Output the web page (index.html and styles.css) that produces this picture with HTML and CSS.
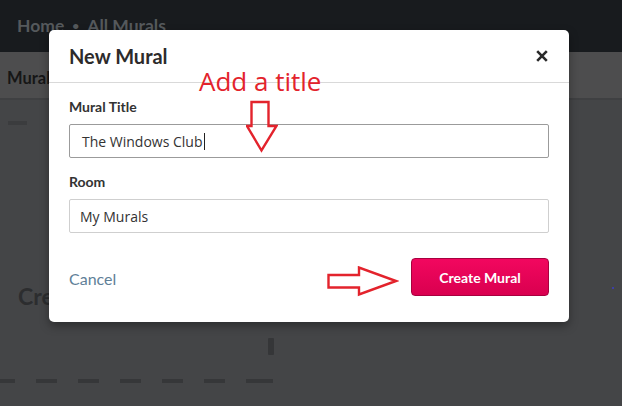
FILE: index.html
```html
<!DOCTYPE html>
<html>
<head>
<meta charset="utf-8">
<link rel="stylesheet" href="styles.css">
</head>
<body>
<div class="page">
  <header class="topbar">
    <span class="crumb">Home</span><span class="dot">•</span><span class="crumb">All Murals</span>
  </header>
  <nav class="subbar"><span class="tab">Murals</span></nav>
  <main class="bg">
    <div class="dash-small"></div>
    <div class="cr">Create</div>
    <div class="vbar"></div>
    <div class="dashes"><i></i><i></i><i></i><i></i><i></i><i></i><i></i></div>
    <div class="blue-dot"></div>
  </main>

  <div class="modal">
    <div class="modal-head">
      <h1>New Mural</h1>
      <svg class="close" width="12" height="12" viewBox="0 0 12 12">
        <path d="M1.2 1.2 L10.8 10.8 M10.8 1.2 L1.2 10.8" stroke="#2a2a2a" stroke-width="2.6" stroke-linecap="butt"/>
      </svg>
    </div>
    <div class="modal-body">
      <label class="lbl">Mural Title</label>
      <div class="input title-input">The Windows Club<span class="caret"></span></div>
      <label class="lbl room-lbl">Room</label>
      <div class="input room-input">My Murals</div>
      <div class="actions">
        <a class="cancel">Cancel</a>
        <button class="create">Create Mural</button>
      </div>
    </div>
    <div class="note">Add a title</div>
    <svg class="arrow-down" width="32" height="54" viewBox="0 0 32 54">
      <path d="M5.5 3 H22.5 V27 H30.5 L15.5 51.5 L1 27 H5.5 Z" fill="none" stroke="#e3232c" stroke-width="2.4" stroke-linejoin="miter"/>
    </svg>
    <svg class="arrow-right" width="72" height="32" viewBox="0 0 72 32">
      <path d="M1.5 9 H32 V1.5 L69 15 L32 28.5 V21.5 H1.5 Z" fill="none" stroke="#e3232c" stroke-width="2.4" stroke-linejoin="miter"/>
    </svg>
  </div>
</div>
</body>
</html>
```

FILE: styles.css
```css
* { box-sizing: border-box; }
html, body { margin: 0; padding: 0; }
body {
  width: 622px;
  height: 406px;
  overflow: hidden;
  background: #444547;
  font-family: Lato, "Open Sans", sans-serif;
}
.page { position: relative; width: 622px; height: 406px; }

.topbar {
  height: 52px;
  background: #181b1e;
  display: flex;
  align-items: center;
  padding: 0 0 2px 17px;
  gap: 8px;
  color: #55595c;
  font-size: 17.5px;
  font-weight: 700;
}
.dot { font-size: 12px; }

.subbar {
  height: 48px;
  background: #4d4d4e;
  border-bottom: 2px solid #3f4042;
  display: flex;
  align-items: stretch;
}
.tab {
  display: flex;
  align-items: center;
  padding: 6px 7px 0;
  font-size: 16.5px;
  font-weight: 700;
  color: #161616;
}

.bg { position: relative; height: 306px; }
.dash-small { position: absolute; left: 8px; top: 21px; width: 19px; height: 4px; background: #3b3c3e; }
.cr { position: absolute; left: 18px; top: 182px; font-size: 23px; font-weight: 700; color: #2c2d2f; }
.vbar { position: absolute; left: 268px; top: 238px; width: 6px; height: 17px; background: #353638; border-radius: 1px; }
.dashes { position: absolute; left: 0; top: 279px; display: flex; gap: 21px; }
.dashes i { display: block; width: 21px; height: 4px; background: #363739; }
.dashes i:first-child { width: 15px; }
.dashes i:last-child { width: 27px; }
.blue-dot { position: absolute; left: 612px; top: 187px; width: 2px; height: 2px; background: #3d3fa6; }

.modal {
  position: absolute;
  left: 49px;
  top: 30px;
  width: 520px;
  height: 292px;
  background: #fff;
  border-radius: 5px;
  box-shadow: 0 4px 10px rgba(0,0,0,0.35);
}
.modal-head {
  height: 53px;
  border-bottom: 1px solid #d9d9d9;
  display: flex;
  align-items: center;
  justify-content: space-between;
  padding: 0 21px 0 20px;
}
.modal-head h1 {
  margin: 0;
  font-size: 20px;
  font-weight: 700;
  color: #2d2b2b;
}
.close { display: block; }

.modal-body { padding: 15px 20px 0 20px; display: flex; flex-direction: column; }
.lbl { font-size: 14px; font-weight: 700; color: #333; height: 18px; line-height: 18px; }
.room-lbl { margin-top: 15px; }
.input {
  margin-top: 8px;
  height: 34px;
  border: 1px solid #9b9b9b;
  border-radius: 2px;
  display: flex;
  align-items: center;
  padding-left: 12px;
  font-family: "Open Sans", sans-serif;
  font-size: 14px;
  color: #333;
}
.room-input { border-color: #cfcfcf; padding-left: 10px; }
.caret { display: inline-block; width: 1px; height: 17px; background: #222; margin-left: 1px; }

.actions {
  margin-top: 25px;
  display: flex;
  align-items: center;
  justify-content: space-between;
}
.cancel { color: #5f7f98; font-size: 16px; padding-top: 3px; }
.create {
  width: 138px;
  height: 38px;
  border: 1px solid #a8003f;
  border-radius: 4px;
  background: linear-gradient(#f2075f, #d9004f);
  color: #fff;
  font-family: Lato, sans-serif;
  font-size: 14px;
  font-weight: 700;
}

.note {
  position: absolute;
  left: 150px;
  top: 36px;
  font-family: "Open Sans", sans-serif;
  font-size: 26px;
  color: #e3232c;
  line-height: 30px;
}
.arrow-down { position: absolute; left: 197px; top: 69px; }
.arrow-right { position: absolute; left: 278px; top: 236px; }
```
